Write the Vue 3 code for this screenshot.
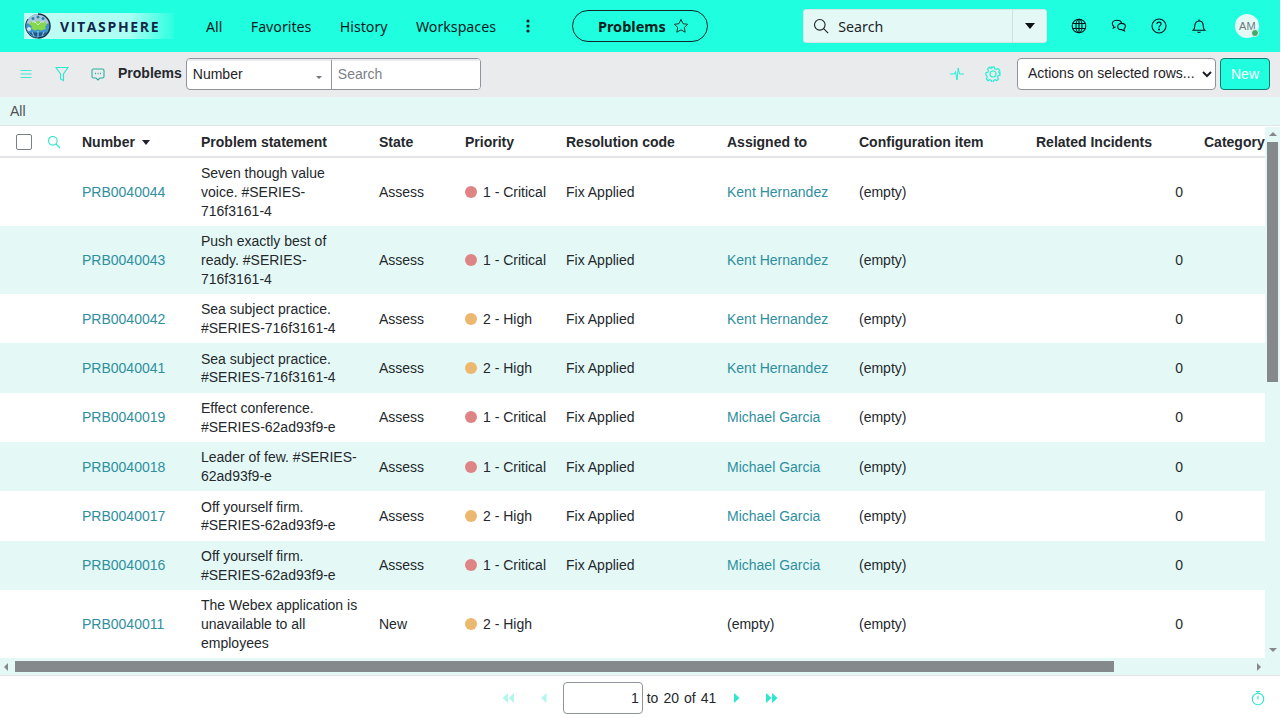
<script setup>
const nav = ['All', 'Favorites', 'History', 'Workspaces']
const columns = [
  { label: 'Number', width: 119 },
  { label: 'Problem statement', width: 178 },
  { label: 'State', width: 86 },
  { label: 'Priority', width: 101 },
  { label: 'Resolution code', width: 161 },
  { label: 'Assigned to', width: 132 },
  { label: 'Configuration item', width: 177 },
  { label: 'Related Incidents', width: 168 },
  { label: 'Category', width: 120 }
]
const KH = 'Kent Hernandez'
const MG = 'Michael Garcia'
const rows = [
  ['PRB0040044', 'Seven though value voice. #SERIES-716f3161-4', 'Assess', 1, 'Fix Applied', KH],
  ['PRB0040043', 'Push exactly best of ready. #SERIES-716f3161-4', 'Assess', 1, 'Fix Applied', KH],
  ['PRB0040042', 'Sea subject practice. #SERIES-716f3161-4', 'Assess', 2, 'Fix Applied', KH],
  ['PRB0040041', 'Sea subject practice. #SERIES-716f3161-4', 'Assess', 2, 'Fix Applied', KH],
  ['PRB0040019', 'Effect conference. #SERIES-62ad93f9-e', 'Assess', 1, 'Fix Applied', MG],
  ['PRB0040018', 'Leader of few. #SERIES-62ad93f9-e', 'Assess', 1, 'Fix Applied', MG],
  ['PRB0040017', 'Off yourself firm. #SERIES-62ad93f9-e', 'Assess', 2, 'Fix Applied', MG],
  ['PRB0040016', 'Off yourself firm. #SERIES-62ad93f9-e', 'Assess', 1, 'Fix Applied', MG],
  ['PRB0040011', 'The Webex application is unavailable to all employees', 'New', 2, '', '']
]
const priorityLabel = { 1: '1 - Critical', 2: '2 - High' }
</script>

<template>
  <div class="page">
    <header class="topbar">
      <div class="logo">
        <svg class="globe" width="28" height="26" viewBox="0 0 28 26">
          <circle cx="14" cy="13" r="12" fill="#3f97c9" />
          <path d="M2.400 10a12 12 0 0 1 23.200 0l-3 1H5.500z" fill="#a9c9d9" />
          <path d="M5 11l3-2.500 3 1 3-2 3 2 3-1 3 2.500-2 3 1 2-5 1.500-3-1-3 1-4-2 1-2z" fill="#86d64e" />
          <path d="M5 19.500h18a12 12 0 0 1-18 0z" fill="#17598f" />
          <path d="M14 18v7M8 19l2 4M20 19l-2 4M11 9l3 3 3-3M8 9l3 0M17 9l3 0" stroke="#e6f5fa" stroke-width=".7" fill="none" />
          <circle cx="9" cy="5.500" r="1.500" fill="#2d7fb5" />
          <circle cx="14" cy="4" r="1.500" fill="#2d7fb5" />
          <circle cx="19" cy="5.500" r="1.500" fill="#2d7fb5" />
          <circle cx="5" cy="16" r="2" fill="#cfeaf7" />
          <path d="M14 1a12 12 0 0 1 0 24" fill="none" stroke="#1c2f45" stroke-width="1.500" />
          <path d="M14 25A12 12 0 0 1 4 6" fill="none" stroke="#1c2f45" stroke-width="1" />
        </svg>
        <span class="logo-text">VITASPHERE</span>
      </div>
      <nav class="nav">
        <a v-for="n in nav" :key="n">{{ n }}</a>
        <svg width="4" height="14" viewBox="0 0 4 14" class="more"><circle cx="2" cy="2" r="1.600" /><circle cx="2" cy="7" r="1.600" /><circle cx="2" cy="12" r="1.600" /></svg>
      </nav>
      <div class="pill">
        <span>Problems</span>
        <svg width="16" height="16" viewBox="0 0 16 16" fill="none" stroke="#1d3b33" stroke-width="1"><path d="M8 1.400l2 4.300 4.700.6-3.400 3.200.9 4.700L8 11.900l-4.200 2.300.9-4.700L1.300 6.300 6 5.700z" /></svg>
      </div>
      <div class="search">
        <svg width="16" height="16" viewBox="0 0 16 16" fill="none" stroke="#1b1f24" stroke-width="1.100"><circle cx="6.800" cy="6.800" r="5.300" /><path d="M10.700 10.700l4.400 4.400" /></svg>
        <span class="search-text">Search</span>
        <span class="search-caret"><i></i></span>
      </div>
      <div class="top-icons">
        <svg width="16" height="16" viewBox="0 0 16 16" fill="none" stroke="#06151a" stroke-width="1.100"><circle cx="8" cy="8" r="6.800" /><ellipse cx="8" cy="8" rx="3" ry="6.800" /><path d="M1.600 5.500h12.800M1.600 10.500h12.800M8 1.200v13.600" /></svg>
        <svg width="16" height="16" viewBox="0 0 16 16" fill="none" stroke="#06151a" stroke-width="1.100"><path d="M6 2.200c-2.600 0-4.700 1.600-4.700 3.500 0 1 .6 1.900 1.400 2.500L2.300 10l2.300-.9" /><path d="M6 2.200c2.300 0 4.200 1.200 4.600 2.900" /><path d="M10.500 5.400c-2.200 0-3.900 1.400-3.900 3.100s1.700 3.100 3.900 3.100l3 1.400-.5-2.100c.9-.6 1.400-1.500 1.400-2.400 0-1.700-1.700-3.100-3.900-3.100z" /></svg>
        <svg width="16" height="16" viewBox="0 0 16 16" fill="none" stroke="#06151a" stroke-width="1.100"><circle cx="8" cy="8" r="7" /><path d="M5.900 6.100c0-1.200.9-2 2.100-2s2.100.8 2.100 1.900c0 1.600-2.100 1.600-2.100 3.400" /><circle cx="8" cy="11.500" r=".5" fill="#06151a" /></svg>
        <svg width="16" height="16" viewBox="0 0 16 16" fill="none" stroke="#06151a" stroke-width="1.100"><path d="M2.200 12.200c1.200-1 1.600-2.200 1.600-4.400C3.800 5 5.600 3 8 3s4.200 2 4.200 4.800c0 2.200.4 3.400 1.600 4.400z" /><path d="M8 1.500V3M6.500 13.800c.3.500.8.700 1.500.7s1.200-.2 1.500-.7" /></svg>
        <div class="avatar">AM<i></i></div>
      </div>
    </header>

    <section class="toolbar">
      <svg class="tool-icon" width="14" height="14" viewBox="0 0 14 14" stroke="#3fe9d3" stroke-width="1.100"><path d="M1.500 3.500h11M1.500 7h11M1.500 10.500h11" /></svg>
      <svg class="tool-icon funnel" width="14" height="16" viewBox="0 0 14 16" fill="none" stroke="#2ce7cf" stroke-width="1.100"><path d="M1 1.500h12L8.500 8v6.500l-3-1.500V8z" /></svg>
      <svg class="tool-icon chat" width="14" height="14" viewBox="0 0 14 14" fill="none" stroke="#2fae9e" stroke-width="1.100"><path d="M2.500 2h9A1.500 1.500 0 0 1 13 3.500v6a1.500 1.500 0 0 1-1.500 1.500H9l-2 2-2-2H2.500A1.500 1.500 0 0 1 1 9.500v-6A1.500 1.500 0 0 1 2.500 2z" /><path d="M4 6.500h1M6.500 6.500h1M9 6.500h1" stroke-width="1.300" /></svg>
      <strong class="title">Problems</strong>
      <div class="combo">
        <div class="combo-select">Number<i></i></div>
        <input class="combo-input" placeholder="Search" />
      </div>
      <svg class="pulse" width="16" height="16" viewBox="0 0 16 16" fill="none" stroke="#22efd4" stroke-width="1"><path d="M1 8h4.500l1 -2.500L8 14l1.200-12 1.300 6H15" /></svg>
      <svg class="gear" width="16" height="16" viewBox="0 0 16 16" fill="none" stroke="#22efd4" stroke-width="1.100"><circle cx="8" cy="8" r="3" /><path d="M6.700 1h2.600l.4 1.800 1.600.7 1.600-1 1.800 1.800-1 1.600.7 1.600L15 6.700v2.600l-1.800.4-.7 1.600 1 1.600-1.800 1.800-1.600-1-1.600.7-.4 1.800H6.700l-.4-1.800-1.600-.7-1.600 1-1.800-1.800 1-1.600-.7-1.600L1 9.300V6.700l1.800-.4.700-1.600-1-1.600 1.800-1.800 1.600 1 1.600-.7z" /></svg>
      <div class="actions-wrap"><select class="actions"><option>Actions on selected rows...</option></select></div>
      <button class="new">New</button>
    </section>

    <div class="crumb">All</div>

    <section class="grid">
      <div class="viewport">
        <table>
          <colgroup>
            <col class="col-check" />
            <col class="col-find" />
            <col v-for="c in columns" :key="c.label" :style="{ width: c.width + 'px' }" />
          </colgroup>
          <thead>
            <tr>
              <th class="cell-check"><span class="checkbox"></span></th>
              <th class="cell-find">
                <svg width="14" height="14" viewBox="0 0 14 14" fill="none" stroke="#2ce7cf" stroke-width="1.100"><circle cx="5.800" cy="5.800" r="4.300" /><path d="M9 9l4 4" /></svg>
              </th>
              <th v-for="(c, i) in columns" :key="c.label">{{ c.label }}<i v-if="i === 0" class="sort"></i></th>
            </tr>
          </thead>
          <tbody>
            <tr v-for="r in rows" :key="r[0]">
              <td></td>
              <td></td>
              <td class="link">{{ r[0] }}</td>
              <td class="statement"><div>{{ r[1] }}</div></td>
              <td>{{ r[2] }}</td>
              <td class="nowrap"><i class="dot" :class="'p' + r[3]"></i>{{ priorityLabel[r[3]] }}</td>
              <td>{{ r[4] }}</td>
              <td :class="r[5] ? 'link' : ''">{{ r[5] || '(empty)' }}</td>
              <td>(empty)</td>
              <td class="num">0</td>
              <td></td>
            </tr>
          </tbody>
        </table>
        <div class="vbar">
          <i class="arrow up"></i>
          <div class="vthumb"></div>
          <i class="arrow down"></i>
        </div>
      </div>
      <div class="hbar">
        <i class="arrow left"></i>
        <div class="hthumb"></div>
        <i class="arrow right"></i>
      </div>
    </section>

    <footer class="footer">
      <div class="pager">
        <svg class="faded" width="14" height="10" viewBox="0 0 14 10" fill="#2ce7cf"><path d="M7 0v10L1.500 5zM13 0v10L7.500 5z" /></svg>
        <svg class="faded single-left" width="7" height="10" viewBox="0 0 7 10" fill="#2ce7cf"><path d="M6.500 0v10L1 5z" /></svg>
        <input class="page-input" value="1" />
        <span class="range first">to</span><span class="range">20</span><span class="range">of</span><span class="range">41</span>
        <svg class="next" width="7" height="10" viewBox="0 0 7 10" fill="#2ce7cf"><path d="M1 0v10l5.500-5z" /></svg>
        <svg class="last" width="14" height="10" viewBox="0 0 14 10" fill="#2ce7cf"><path d="M1 0v10l5.500-5zM7 0v10l5.500-5z" /></svg>
      </div>
      <svg class="timer" width="14" height="16" viewBox="0 0 14 16" fill="none" stroke="#2ce7cf" stroke-width="1.100"><circle cx="7" cy="9" r="5.700" /><path d="M5 1.500h4M7 1.500v2M7 6v3.500" /></svg>
    </footer>
  </div>
</template>

<style>
html, body { margin: 0; background: #fff; overflow: hidden; }
</style>

<style scoped>
.page {
  width: 1280px;
  height: 718px;
  display: flex;
  flex-direction: column;
  overflow: hidden;
  font-family: "Liberation Sans", Arial, sans-serif;
  font-size: 14px;
  color: #1f2328;
}
.topbar {
  height: 52px;
  flex: none;
  background: #1fffdf;
  display: flex;
  align-items: center;
  color: #06201f;
  font-family: "Noto Sans", sans-serif;
}
.logo {
  margin-left: 24px;
  width: 150px;
  height: 26px;
  display: flex;
  align-items: center;
  background: linear-gradient(90deg, #c4fcf4, #aafff3 70%, #2bffe0);
  flex: none;
}
.logo-text {
  margin-left: 8px;
  font-family: "Open Sans", sans-serif;
  font-weight: 700;
  font-size: 14px;
  letter-spacing: 1.650px;
  color: #12264a;
}
.nav {
  margin-left: 32px;
  display: flex;
  align-items: center;
  gap: 28.400px;
  font-size: 14.200px;
}
.more { fill: #06201f; margin-left: 2px; }
.pill {
  margin-left: 42px;
  width: 136px;
  height: 32px;
  box-sizing: border-box;
  border: 1px solid #0c2b2b;
  border-radius: 16px;
  padding-left: 6px;
  display: flex;
  align-items: center;
  justify-content: center;
  gap: 7px;
  font-weight: 700;
  font-size: 14.500px;
  color: #04201d;
}
.search {
  margin-left: 95px;
  width: 244px;
  height: 34px;
  box-sizing: border-box;
  background: #e4f9f6;
  border: 1px solid #d3e6e3;
  border-radius: 3px;
  display: flex;
  align-items: center;
  padding-left: 9px;
  flex: none;
  font-size: 14.200px;
}
.search-text { margin-left: 9px; flex: 1; color: #1d2328; }
.search-caret {
  width: 33px;
  height: 100%;
  border-left: 1px solid #cfe2df;
  display: flex;
  align-items: center;
  justify-content: center;
}
.search-caret i {
  width: 0;
  height: 0;
  border: 5px solid transparent;
  border-top: 6px solid #0d1216;
  border-bottom: 0;
}
.top-icons {
  margin-left: 24px;
  display: flex;
  align-items: center;
  gap: 24px;
}
.avatar {
  position: relative;
  margin-left: 4px;
  width: 24px;
  height: 24px;
  border-radius: 50%;
  background: #e4f9f6;
  color: #6f7a80;
  font: 11px/24px "Liberation Sans", sans-serif;
  text-align: center;
}
.avatar i {
  position: absolute;
  right: 0;
  bottom: 1px;
  width: 8px;
  height: 8px;
  border-radius: 50%;
  background: #4aa56a;
  border: 1px solid #dff5ee;
  box-sizing: border-box;
}
.toolbar {
  height: 45px;
  flex: none;
  box-sizing: border-box;
  padding-bottom: 1px;
  background: #e9ebed;
  display: flex;
  align-items: center;
  padding-left: 19px;
}
.tool-icon { flex: none; }
.funnel { margin-left: 22px; }
.chat { margin-left: 22px; }
.title { margin: 0 0 2px 13px; color: #25282c; }
.combo {
  margin-left: 4px;
  display: flex;
  width: 295px;
  height: 32px;
  box-sizing: border-box;
  border: 1px solid #8f939e;
  border-radius: 4px;
  background: #fff;
  overflow: hidden;
}
.combo-select {
  position: relative;
  width: 145px;
  box-sizing: border-box;
  padding: 0 6px;
  line-height: 26px;
  border-right: 1px solid #8f939e;
  color: #1f2328;
  border-top: 2px solid #e9ebed;
}
.combo-select i {
  position: absolute;
  right: 9px;
  top: 15px;
  width: 0;
  height: 0;
  border: 3px solid transparent;
  border-top: 3px solid #70757c;
  border-bottom: 0;
}
.combo-input {
  flex: 1;
  min-width: 0;
  box-sizing: border-box;
  height: 30px;
  border: 0;
  outline: 0;
  padding: 0 6px 2px;
  font: inherit;
  background: #fff;
  border-top: 2px solid #e9ebed;
}
.combo-input::placeholder { color: #7b7f87; opacity: 1; }
.pulse { margin-left: auto; }
.gear { margin-left: 20px; }
.actions-wrap {
  margin-left: 16px;
  width: 199px;
  height: 32px;
  flex: none;
}
.actions {
  width: 199px;
  height: 32px;
  box-sizing: border-box;
  border: 1px solid #8f939e;
  border-radius: 4px;
  background: #fff;
  color: #1f2328;
  font: 14px "Liberation Sans", sans-serif;
  padding: 0 0 2px 6px;
}
.new {
  margin-left: 4px;
  margin-right: 10px;
  width: 50px;
  height: 32px;
  box-sizing: border-box;
  background: #1fffdf;
  border: 1px solid #0f7f72;
  border-radius: 4px;
  color: #fff;
  font: 14px "Liberation Sans", sans-serif;
  padding: 0 0 1px;
}
.crumb {
  height: 29px;
  flex: none;
  background: #e4f9f6;
  box-sizing: border-box;
  padding-left: 10px;
  line-height: 28px;
  color: #4d5258;
  border-bottom: 1px solid #dbe8e6;
}
.grid {
  flex: 1;
  min-height: 0;
  display: flex;
  flex-direction: column;
  padding-top: 1px;
  background: #fff;
}
.viewport {
  position: relative;
  flex: 1;
  min-height: 0;
  overflow: hidden;
}
table {
  border-collapse: separate;
  border-spacing: 0;
  table-layout: fixed;
  width: 1312px;
}
.col-check { width: 38px; }
.col-find { width: 32px; }
th {
  height: 31px;
  box-sizing: border-box;
  padding: 1px 0 0 12px;
  text-align: left;
  font-weight: 700;
  white-space: nowrap;
  color: #25282c;
  border-bottom: 2px solid #e4e6ea;
}
.cell-check { padding: 0 0 0 16px; }
.cell-find { padding: 0 0 0 9px; }
.cell-find svg { display: block; }
.checkbox {
  display: block;
  width: 16px;
  height: 16px;
  box-sizing: border-box;
  border: 1px solid #7c8088;
  border-radius: 2px;
  background: #fff;
}
.sort {
  display: inline-block;
  margin-left: 7px;
  vertical-align: 2px;
  width: 0;
  height: 0;
  border: 4.500px solid transparent;
  border-top: 5px solid #1f2328;
  border-bottom: 0;
}
td {
  padding: 6.400px 0 5.600px 12px;
  line-height: 18.670px;
  color: #24282c;
  vertical-align: middle;
}
tbody tr:nth-child(even) td { background: #e4f9f6; }
.link { color: #2f8f9f; }
.statement div { width: 160px; }
.nowrap { white-space: nowrap; }
.num { text-align: right; padding: 6.400px 9px 5.600px 0; }
.dot {
  display: inline-block;
  width: 12px;
  height: 12px;
  border-radius: 50%;
  margin-right: 6px;
  vertical-align: -1px;
}
.p1 { background: #df8484; }
.p2 { background: #ecb76e; }
.vbar {
  position: absolute;
  top: 0;
  right: 0;
  bottom: 0;
  width: 15px;
  background: #e4f9f6;
  display: flex;
  flex-direction: column;
  align-items: center;
}
.vthumb {
  width: 11px;
  height: 240px;
  margin-top: 15px;
  background: #85898c;
}
.arrow { position: absolute; width: 0; height: 0; border: 4px solid transparent; }
.up { top: 5px; border-bottom: 4px solid #85898c; border-top: 0; }
.down { bottom: 6px; border-top: 4px solid #85898c; border-bottom: 0; }
.hbar {
  position: relative;
  height: 18px;
  flex: none;
  box-sizing: border-box;
  background: #e4f9f6;
  border-bottom: 1px solid #dfe3e3;
  display: flex;
  align-items: center;
}
.hthumb {
  margin-left: 15px;
  width: 1099px;
  height: 11px;
  background: #85898c;
}
.left { left: 4px; top: 5px; border-right: 4px solid #85898c; border-left: 0; }
.right { right: 19px; top: 5px; border-left: 4px solid #85898c; border-right: 0; }
.footer {
  position: relative;
  height: 42px;
  flex: none;
  box-sizing: border-box;
  padding-top: 2px;
  background: #fff;
  display: flex;
  align-items: center;
  justify-content: center;
}
.pager { display: flex; align-items: center; }
.faded { opacity: .35; }
.single-left { margin-left: 25px; margin-right: 16px; }
.page-input {
  width: 80px;
  height: 32px;
  box-sizing: border-box;
  border: 1px solid #8f939e;
  border-radius: 4px;
  text-align: right;
  padding: 0 3px;
  font: 14px "Liberation Sans", sans-serif;
  color: #24282c;
  outline: 0;
}
.range { margin-left: 5px; color: #24282c; }
.range.first { margin-left: 4px; }
.next { margin-left: 17px; }
.last { margin-left: 25px; }
.timer { position: absolute; right: 15px; top: 14px; }
</style>
